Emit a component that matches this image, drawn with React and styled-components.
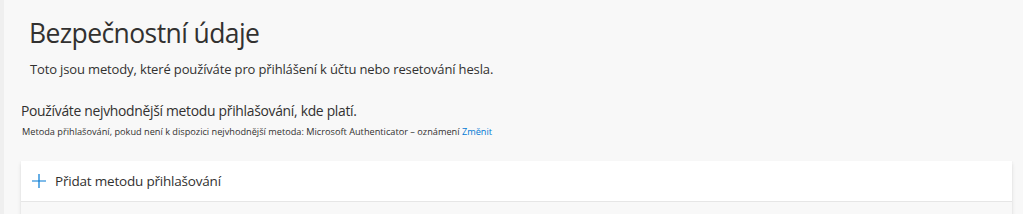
import React from "react";
import styled, { createGlobalStyle } from "styled-components";

const Global = createGlobalStyle`
  html, body { margin: 0; padding: 0; height: 100%; }
  body {
    background: #f8f8f8;
    font-family: "Open Sans", "Noto Sans", "Liberation Sans", sans-serif;
    color: #323130;
    overflow: hidden;
  }
`;

const Shell = styled.div`
  display: flex;
  height: 214px;
  overflow: hidden;
`;

const Rail = styled.div`
  width: 4px;
  flex: none;
  background: #efefef;
`;

const Main = styled.main`
  flex: 1;
  padding: 13px 11px 0 17px;
  display: flex;
  flex-direction: column;
  overflow: hidden;
`;

const Title = styled.h1`
  margin: 0 0 0 8px;
  font-size: 26.5px;
  font-weight: 400;
  line-height: 40px;
  letter-spacing: -0.6px;
  color: #323130;
`;

const Lead = styled.p`
  margin: 6px 0 0 9px;
  font-size: 13px;
  line-height: 20px;
  letter-spacing: -0.14px;
  color: #323130;
`;

const Section = styled.section`
  margin-top: 21px;
  display: flex;
  flex-direction: column;
`;

const Heading = styled.h2`
  margin: 0;
  font-size: 13.9px;
  font-weight: 400;
  line-height: 22px;
  letter-spacing: -0.3px;
  color: #323130;
`;

const Note = styled.p`
  margin: 3px 0 0 1px;
  font-size: 9.2px;
  line-height: 14px;
  color: #323130;
`;

const Link = styled.a`
  color: #0078d4;
  text-decoration: none;
  cursor: pointer;
`;

const Card = styled.div`
  margin-top: 22px;
  background: #fff;
  box-shadow: 0 1.6px 3.6px rgba(0, 0, 0, 0.13), 0 0.3px 0.9px rgba(0, 0, 0, 0.11);
  display: flex;
  flex-direction: column;
  flex: none;
`;

const AddRow = styled.button`
  all: unset;
  display: flex;
  align-items: center;
  gap: 8px;
  height: 40px;
  padding: 0 0 0 10px;
  border-bottom: 1px solid #e6e6e6;
  font-family: inherit;
  font-size: 13.5px;
  letter-spacing: -0.2px;
  color: #323130;
  cursor: pointer;
`;

const TableHead = styled.div`
  height: 40px;
  background: #f8f8f8;
`;

const PlusIcon = () => (
  <svg width="16" height="16" viewBox="0 0 16 16" aria-hidden="true">
    <path d="M8 1v14M1 8h14" stroke="#0078d4" strokeWidth="1.2" fill="none" />
  </svg>
);

export default function App() {
  return (
    <>
      <Global />
      <Shell>
        <Rail />
        <Main>
          <Title>Bezpečnostní údaje</Title>
          <Lead>
            Toto jsou metody, které používáte pro přihlášení k účtu nebo resetování hesla.
          </Lead>
          <Section>
            <Heading>Používáte nejvhodnější metodu přihlašování, kde platí.</Heading>
            <Note>
              Metoda přihlašování, pokud není k dispozici nejvhodnější metoda: Microsoft
              Authenticator – oznámení <Link>Změnit</Link>
            </Note>
          </Section>
          <Card>
            <AddRow>
              <PlusIcon />
              Přidat metodu přihlašování
            </AddRow>
            <TableHead />
          </Card>
        </Main>
      </Shell>
    </>
  );
}
